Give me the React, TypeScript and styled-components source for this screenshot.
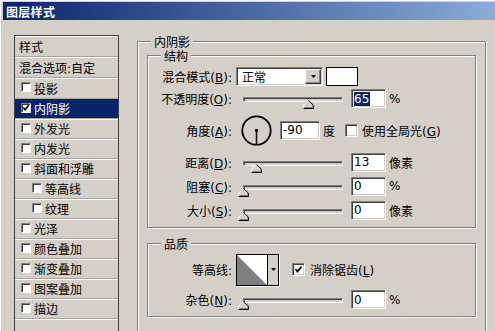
import React from 'react';
import styled, { createGlobalStyle } from 'styled-components';

const GlobalStyle = createGlobalStyle`
  html, body { margin: 0; padding: 0; background: #d4d0c8; }
  body { width: 495px; height: 331px; overflow: hidden; }
`;

const UI_FONT = `"DejaVu Sans", "Noto Sans CJK SC", sans-serif`;
const CJK_FONT = `"Noto Sans CJK SC", sans-serif`;

const Window = styled.div`
  width: 495px;
  height: 331px;
  overflow: hidden;
  box-sizing: border-box;
  padding: 2px 0 0 3px;
  background: #d4d0c8;
  box-shadow: inset 1px 1px 0 #fff;
  font-family: ${UI_FONT};
  font-size: 12px;
  color: #000;
  display: flex;
  flex-direction: column;
`;

const TitleBar = styled.div`
  flex: none;
  height: 18px;
  padding-left: 3px;
  display: flex;
  align-items: center;
  background: linear-gradient(to right, #0a246a, #a6caf0) 0 0 / 600px 100% no-repeat;
  color: #fff;
  font-family: ${CJK_FONT};
  font-weight: 700;
  font-size: 12px;
  letter-spacing: 0.3px;
`;

const Content = styled.div`
  display: flex;
  align-items: flex-start;
`;

const Sidebar = styled.div`
  flex: none;
  width: 105px;
  height: 310px;
  margin: 15px 0 0 11px;
  box-sizing: border-box;
  border: 1px solid #404040;
  background: #d4d0c8;
  display: flex;
  flex-direction: column;
`;

const ListRow = styled.div<{ $h: number; $indent?: boolean; $selected?: boolean; $plain?: boolean }>`
  flex: none;
  height: ${(p) => p.$h}px;
  box-sizing: border-box;
  display: flex;
  align-items: center;
  gap: 3px;
  padding-left: ${(p) => (p.$plain ? 4 : p.$indent ? 17 : 6)}px;
  border-bottom: 1px solid #a8a49c;
  box-shadow: ${(p) => (p.$selected ? 'none' : 'inset 0 1px 0 #fff')};
  background: ${(p) => (p.$selected ? '#0a246a' : 'transparent')};
  color: ${(p) => (p.$selected ? '#fff' : '#000')};
  font-family: ${UI_FONT};
  font-size: 12px;
`;

const ListCheck = styled.span`
  flex: none;
  width: 10px;
  height: 10px;
  box-sizing: border-box;
  border: 1px solid;
  border-color: #808080 #fff #fff #808080;
  box-shadow: inset 1px 1px 0 #404040;
  background: #fff;
  display: flex;
  align-items: center;
  justify-content: center;
  margin-top: -2px;
`;

const Main = styled.div`
  flex: none;
  margin: 21px 0 0 18px;
`;

const GroupBox = styled.div<{ $w: number; $h: number; $pad: string }>`
  position: relative;
  box-sizing: border-box;
  width: ${(p) => p.$w}px;
  height: ${(p) => p.$h}px;
  padding: ${(p) => p.$pad};
  border: 1px solid #808080;
  box-shadow: inset 1px 1px 0 #fff, 1px 1px 0 #fff;
`;

const Legend = styled.span`
  position: absolute;
  top: -7px;
  left: 13px;
  padding: 0 3px;
  line-height: 13px;
  background: #d4d0c8;
  font-family: ${CJK_FONT};
  font-size: 12px;
`;

const Row = styled.div<{ $h: number }>`
  height: ${(p) => p.$h}px;
  display: flex;
  align-items: center;
  white-space: nowrap;
`;

const Label = styled.span`
  flex: none;
  width: 84px;
  margin-right: 4px;
  text-align: right;
  font-family: ${UI_FONT};
  font-size: 12px;
  u { text-decoration: underline; text-underline-offset: 1px; }
`;

const Text = styled.span<{ $ml?: number }>`
  flex: none;
  margin-left: ${(p) => p.$ml ?? 0}px;
  font-family: ${UI_FONT};
  font-size: 12px;
`;

const Sunken = styled.div<{ $w: number; $h?: number; $ml?: number }>`
  flex: none;
  position: relative;
  box-sizing: border-box;
  width: ${(p) => p.$w}px;
  height: ${(p) => p.$h ?? 19}px;
  margin-left: ${(p) => p.$ml ?? 0}px;
  border: 1px solid;
  border-color: #808080 #fff #fff #808080;
  box-shadow: inset 1px 1px 0 #404040, inset -1px -1px 0 #d4d0c8;
  background: #fff;
  display: flex;
  align-items: center;
`;

const FieldText = styled.span<{ $sel?: boolean }>`
  margin-left: 2px;
  padding: 0 1px 0 0;
  line-height: 14px;
  font-family: "DejaVu Sans", sans-serif;
  font-size: 12px;
  background: ${(p) => (p.$sel ? '#0a246a' : 'transparent')};
  color: ${(p) => (p.$sel ? '#fff' : '#000')};
`;

const SelectText = styled.span`
  flex: 1;
  padding-left: 5px;
  font-family: ${CJK_FONT};
  font-size: 12px;
`;

const DropButton = styled.div`
  flex: none;
  width: 16px;
  height: 15px;
  margin-right: 1px;
  box-sizing: border-box;
  border: 1px solid;
  border-color: #fff #404040 #404040 #fff;
  box-shadow: inset -1px -1px 0 #808080;
  background: #d4d0c8;
  display: flex;
  align-items: center;
  justify-content: center;
`;

const Swatch = styled.div`
  flex: none;
  width: 32px;
  height: 19px;
  margin-left: 3px;
  box-sizing: border-box;
  border: 1px solid #000;
  background: #fff;
`;

const SliderTrack = styled.div<{ $ml?: number }>`
  flex: none;
  position: relative;
  width: 100px;
  height: 5px;
  margin: 2px 8px 0 ${(p) => p.$ml ?? 7}px;
  box-sizing: border-box;
  border: 1px solid;
  border-color: #808080 #fff #fff #808080;
  box-shadow: inset 1px 1px 0 #404040;
  background: #d4d0c8;
`;

const Thumb = styled.svg`
  position: absolute;
  top: 2px;
  display: block;
`;

const Dial = styled.svg`
  flex: none;
  margin-left: 5px;
  display: block;
`;

const CheckBox = styled.span<{ $ml?: number }>`
  flex: none;
  width: 13px;
  height: 13px;
  margin-left: ${(p) => p.$ml ?? 0}px;
  box-sizing: border-box;
  border: 1px solid;
  border-color: #808080 #fff #fff #808080;
  box-shadow: inset 1px 1px 0 #404040, inset -1px -1px 0 #d4d0c8;
  background: #fff;
  display: flex;
  align-items: center;
  justify-content: center;
`;

const Contour = styled.div`
  flex: none;
  width: 43px;
  height: 32px;
  box-sizing: border-box;
  border: 1px solid #000;
  box-shadow: 1px 1px 0 #fff;
  display: flex;
  background: #d4d0c8;
`;

const ContourPreview = styled.svg`
  flex: none;
  display: block;
`;

const ContourDrop = styled.div`
  flex: 1;
  border-left: 1px solid #000;
  display: flex;
  align-items: center;
  justify-content: center;
`;

const QualityGap = styled.div`
  height: 15px;
`;

const Arrow = () => (
  <svg width="5" height="3" viewBox="0 0 5 3">
    <polygon points="0,0 5,0 2.5,3" fill="#000" />
  </svg>
);

const Check = ({ size = 9 }: { size?: number }) => (
  <svg width={size} height={size} viewBox="0 0 9 9">
    <polyline points="1.5,4 3.5,6.5 7.5,1.5" fill="none" stroke="#000" strokeWidth="1.8" />
  </svg>
);

const Slider = ({ value, ml }: { value: number; ml?: number }) => (
  <SliderTrack $ml={ml}>
    <Thumb width="11" height="9" viewBox="0 0 11 9" style={{ left: value - 6 }}>
      <polygon points="5.5,0 11,5 11,9 0,9 0,5" fill="#d4d0c8" />
      <polyline points="0.5,8.5 0.5,5.2 5.5,0.7" fill="none" stroke="#fff" strokeWidth="1" />
      <polyline points="5.5,0.7 10.5,5.2 10.5,8.5 0.5,8.5" fill="none" stroke="#000" strokeWidth="1" />
      <polyline points="9.5,5.6 9.5,7.5 1.5,7.5" fill="none" stroke="#808080" strokeWidth="1" />
    </Thumb>
  </SliderTrack>
);

type Item = { label: string; checked?: boolean; selected?: boolean; indent?: boolean };
const items: Item[] = [
  { label: '投影' },
  { label: '内阴影', checked: true, selected: true },
  { label: '外发光' },
  { label: '内发光' },
  { label: '斜面和浮雕' },
  { label: '等高线', indent: true },
  { label: '纹理', indent: true },
  { label: '光泽' },
  { label: '颜色叠加' },
  { label: '渐变叠加' },
  { label: '图案叠加' },
  { label: '描边' },
];

export default function App() {
  return (
    <>
      <GlobalStyle />
      <Window>
        <TitleBar>图层样式</TitleBar>
        <Content>
          <Sidebar>
            <ListRow $h={21} $plain>样式</ListRow>
            <ListRow $h={21} $plain>混合选项:自定</ListRow>
            {items.map((it, i) => (
              <ListRow key={it.label} $h={i === 0 ? 21 : 20} $indent={it.indent} $selected={it.selected}>
                <ListCheck>{it.checked && <Check size={8} />}</ListCheck>
                <span>{it.label}</span>
              </ListRow>
            ))}
            <ListRow $h={20} />
          </Sidebar>
          <Main>
            <GroupBox $w={349} $h={310} $pad="13px 0 0 9px">
              <Legend>内阴影</Legend>
              <GroupBox $w={329} $h={173} $pad="10px 0 0 0">
                <Legend>结构</Legend>
                <Row $h={21}>
                  <Label>混合模式(<u>B</u>):</Label>
                  <Sunken $w={87}>
                    <SelectText>正常</SelectText>
                    <DropButton>
                      <Arrow />
                    </DropButton>
                  </Sunken>
                  <Swatch />
                </Row>
                <Row $h={23}>
                  <Label>不透明度(<u>O</u>):</Label>
                  <Slider value={65} />
                  <Sunken $w={35}>
                    <FieldText $sel>65</FieldText>
                  </Sunken>
                  <Text $ml={3}>%</Text>
                </Row>
                <Row $h={40}>
                  <Label>角度(<u>A</u>):</Label>
                  <Dial width="31" height="31" viewBox="0 0 31 31">
                    <circle cx="15.5" cy="15.5" r="14.2" fill="none" stroke="#000" strokeWidth="1.8" />
                    <line x1="15.5" y1="15.5" x2="15.5" y2="29.5" stroke="#000" strokeWidth="1.5" />
                    <rect x="14" y="14" width="3" height="3" fill="#000" />
                  </Dial>
                  <Sunken $w={40} $ml={8}>
                    <FieldText>-90</FieldText>
                  </Sunken>
                  <Text $ml={3}>度</Text>
                  <CheckBox $ml={10} />
                  <Text $ml={4}>使用全局光(<u>G</u>)</Text>
                </Row>
                <Row $h={24}>
                  <Label>距离(<u>D</u>):</Label>
                  <Slider value={13} />
                  <Sunken $w={35}>
                    <FieldText>13</FieldText>
                  </Sunken>
                  <Text $ml={3}>像素</Text>
                </Row>
                <Row $h={24}>
                  <Label>阻塞(<u>C</u>):</Label>
                  <Slider value={0} />
                  <Sunken $w={35}>
                    <FieldText>0</FieldText>
                  </Sunken>
                  <Text $ml={3}>%</Text>
                </Row>
                <Row $h={24}>
                  <Label>大小(<u>S</u>):</Label>
                  <Slider value={0} />
                  <Sunken $w={35}>
                    <FieldText>0</FieldText>
                  </Sunken>
                  <Text $ml={3}>像素</Text>
                </Row>
              </GroupBox>
              <QualityGap />
              <GroupBox $w={329} $h={74} $pad="8px 0 0 0">
                <Legend>品质</Legend>
                <Row $h={35}>
                  <Label>等高线:</Label>
                  <Contour>
                    <ContourPreview width="30" height="30" viewBox="0 0 30 30">
                      <rect x="0" y="0" width="30" height="30" fill="#fff" />
                      <polygon points="0,0 30,30 0,30" fill="#808080" />
                    </ContourPreview>
                    <ContourDrop>
                      <Arrow />
                    </ContourDrop>
                  </Contour>
                  <CheckBox $ml={13}>
                    <Check />
                  </CheckBox>
                  <Text $ml={5}>消除锯齿(<u>L</u>)</Text>
                </Row>
                <Row $h={25}>
                  <Label>杂色(<u>N</u>):</Label>
                  <Slider value={0} />
                  <Sunken $w={35}>
                    <FieldText>0</FieldText>
                  </Sunken>
                  <Text $ml={3}>%</Text>
                </Row>
              </GroupBox>
            </GroupBox>
          </Main>
        </Content>
      </Window>
    </>
  );
}
